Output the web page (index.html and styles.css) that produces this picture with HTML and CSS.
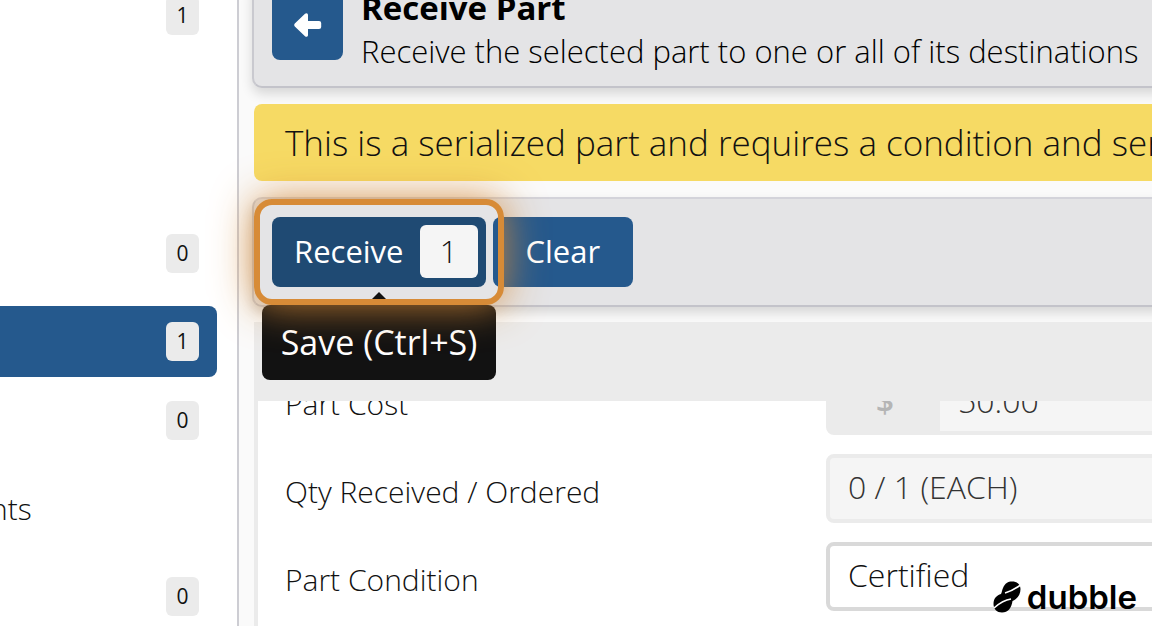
FILE: index.html
```html
<!DOCTYPE html>
<html lang="en">
  <head>
    <meta charset="UTF-8" />
    <title>Receive Part</title>
    <link rel="stylesheet" href="styles.css">
  </head>
  <body>

    <div class="wrapper">
      <nav class="sidebar">
        <ul>
          <li><a href="#"><span class="badge">1</span></a></li>
        </ul>
        <ul class="group-orders">
          <li><a href="#"><span class="badge">0</span></a></li>
          <li><a href="#" class="active"><span class="badge">1</span></a></li>
        </ul>
        <ul class="group-parts">
          <li><a href="#"><span class="badge">0</span></a></li>
          <li><a href="#"><span class="name">nts</span></a></li>
          <li><a href="#"><span class="badge">0</span></a></li>
        </ul>
      </nav>

      <main class="content">
        <header class="card page-header">
          <button type="button" class="btn btn-back" aria-label="Back">
            <svg width="28" height="24" viewBox="0 0 28 24">
              <path d="M0.800 10.600 L11 0.800 Q12.200 -0.200 13.300 0.500 Q14 1 14 2 V8 H25 Q27.200 8 27.200 10 V14 Q27.200 16 25 16 H14 V22 Q14 23 13.300 23.500 Q12.200 24.200 11 23.200 L0.800 13.400 Q-0.400 12 0.800 10.600 Z" fill="#fff" />
            </svg>
          </button>
          <div class="page-title">
            <h1>Receive Part</h1>
            <p>Receive the selected part to one or all of its destinations</p>
          </div>
        </header>

        <div class="alert">This is a serialized part and requires a condition and serial number</div>

        <div class="card toolbar">
          <div class="receive">
            <button type="button" class="btn btn-receive" aria-describedby="saveTip">Receive <span class="count">1</span></button>
            <div class="tooltip" id="saveTip" role="tooltip">Save (Ctrl+S)</div>
            <div class="highlight"></div>
          </div>
          <button type="button" class="btn">Clear</button>
        </div>

        <section class="panel">
          <div class="panel-header"></div>
          <form class="panel-body">
            <div class="form-row">
              <label for="cost">Part Cost</label>
              <div class="field input-group">
                <span class="prefix">$</span>
                <input type="text" id="cost" value="50.00" readonly>
              </div>
            </div>
            <div class="form-row">
              <label for="qty">Qty Received / Ordered</label>
              <input type="text" class="field readonly" id="qty" value="0 / 1 (EACH)" readonly>
            </div>
            <div class="form-row">
              <label for="condition">Part Condition</label>
              <select class="field" id="condition">
                <option>Certified</option>
              </select>
            </div>
          </form>
        </section>
      </main>
    </div>

    <div class="brand">
      <svg width="28" height="32" viewBox="0 0 28 32">
        <path d="M10 7 C12 2 15 0.500 19 0.500 C24 0.500 27.500 3 27.500 8 C27.500 14 24 18 19.500 20 C18.500 27 15 31.500 9 31.500 C4 31.500 0.500 28 0.500 23 C0.500 17 4 14.500 8 13 C9 11 9 9 10 7 Z" />
        <path d="M12 12 Q19 10 27.500 4 M1 27 Q10 19 18 18" stroke="#fff" stroke-width="1.600" fill="none" />
      </svg>
      <span>dubble</span>
    </div>

  </body>
</html>
```
FILE: styles.css
```css
* {
  box-sizing: border-box;
}

body {
  margin: 0;
  font-family: "Open Sans", sans-serif;
  font-size: 30px;
  font-weight: 300;
  color: #111;
  background-color: #fff;
}

h1, p, ul {
  margin: 0;
  padding: 0;
}

button, input, select {
  font: inherit;
  color: inherit;
}

.wrapper {
  display: flex;
  height: 100vh;
  overflow: hidden;
}

/* Sidebar */
.sidebar {
  flex: none;
  width: 239px;
  padding-right: 20px;
  border-right: 2px solid #cdcdd3;
}

.sidebar ul {
  display: grid;
  gap: 17px;
  margin-top: -20px;
  list-style: none;
}

.sidebar .group-orders {
  margin-top: 167px;
}

.sidebar .group-parts {
  margin-top: 8px;
}

.sidebar a {
  display: flex;
  align-items: center;
  height: 71px;
  padding-right: 18px;
  border-radius: 0 8px 8px 0;
  color: #111;
  text-decoration: none;
}

.sidebar .active {
  background-color: #25598d;
}

.name {
  margin-left: -10px;
}

.badge {
  width: 33px;
  margin-left: auto;
  border-radius: 6px;
  font-size: 21px;
  font-weight: 400;
  line-height: 39px;
  text-align: center;
  background-color: #ebebeb;
}

/* Main column, runs past the right edge */
.content {
  flex: 1;
  min-width: 0;
  margin: -20px -20px 0 0;
  padding-left: 13px;
  background-color: #fafafa;
}

.card {
  display: flex;
  border: 2px solid;
  border-color: #d3d3da #c9c9cf #c3c3ca;
  border-radius: 10px;
  background-color: #e4e4e6;
  box-shadow: 0 6px 12px rgba(0, 0, 0, 0.14);
}

.page-header {
  gap: 18px;
  padding: 7px 18px 11px;
  color: #000;
}

.page-title {
  white-space: nowrap;
}

.page-title h1 {
  font-size: 33px;
  font-weight: 700;
  line-height: 38px;
}

.page-title p {
  font-size: 31px;
  line-height: 48px;
}

.btn {
  height: 70px;
  padding: 0 33px 2px;
  border: 0;
  border-radius: 8px;
  font-size: 31px;
  font-weight: 400;
  color: #fff;
  background-color: #25598d;
}

.btn-back {
  width: 71px;
  height: 71px;
  padding: 0;
}

.btn-back svg {
  display: block;
  margin: auto;
}

.alert {
  overflow: hidden;
  margin: 16px 0 16px 2px;
  padding-left: 31px;
  border-radius: 8px;
  font-size: 35px;
  line-height: 77px;
  white-space: nowrap;
  background-color: #f6da64;
}

.toolbar {
  gap: 7px;
  padding: 18px;
}

.receive {
  position: relative;
}

.btn-receive {
  display: flex;
  align-items: center;
  gap: 16px;
  padding: 0 8px 2px 22px;
  background-color: #1f4a73;
}

.count {
  width: 58px;
  border-radius: 6px;
  font-weight: 300;
  line-height: 53px;
  color: #111;
  background-color: #f5f5f5;
}

.tooltip {
  position: absolute;
  top: 88px;
  left: -10px;
  width: 234px;
  border-radius: 8px;
  font-size: 34px;
  font-weight: 400;
  line-height: 75px;
  text-align: center;
  white-space: nowrap;
  color: #fff;
  background-color: #121212;
}

.tooltip::before {
  content: "";
  position: absolute;
  bottom: 100%;
  left: 50%;
  margin-left: -13px;
  border: 13px solid transparent;
  border-top: 0;
  border-bottom-color: #121212;
}

/* Ring round the active step */
.highlight {
  position: absolute;
  top: -18px;
  left: -18px;
  width: 250px;
  height: 106px;
  border: 6px solid #d78b37;
  border-radius: 18px;
  box-shadow: 0 0 40px rgba(215, 139, 55, 0.9);
  pointer-events: none;
}

/* Form */
.panel {
  margin: 15px 0 0 2px;
}

.panel-header {
  height: 79px;
  background-color: #ebebeb;
}

.panel-body {
  display: grid;
  gap: 19px;
  overflow: hidden;
  height: 100vh;
  align-content: start;
  padding-left: 27px;
  border-left: 4px solid #ebebeb;
  background-color: #fff;
}

.form-row {
  display: grid;
  grid-template-columns: 541px 1fr;
  align-items: center;
}

/* first row is scrolled under the panel header */
.form-row:first-child {
  margin-top: -35px;
}

.form-row label {
  padding-top: 6px;
}

.field {
  width: 100%;
  height: 69px;
  padding: 0 18px 4px;
  border: 4px solid #d9d9d9;
  border-radius: 8px;
  font-size: 32px;
  background-color: #fff;
  appearance: none;
}

.readonly,
.input-group {
  border-color: #ebebeb;
  color: #333;
  background-color: #f5f5f5;
}

.input-group {
  display: flex;
  padding: 0;
}

.input-group input {
  flex: 1;
  padding: 0 18px;
  border: 0;
  background: none;
}

.prefix {
  width: 110px;
  line-height: 61px;
  text-align: center;
  font-weight: 600;
  color: #b5b5b5;
  background-color: #ebebeb;
}

.brand {
  position: absolute;
  right: 15px;
  bottom: 7px;
  display: flex;
  align-items: center;
  gap: 6px;
  font-family: Inter, sans-serif;
  font-size: 33px;
  font-weight: 600;
  line-height: 44px;
  color: #000;
}
```
